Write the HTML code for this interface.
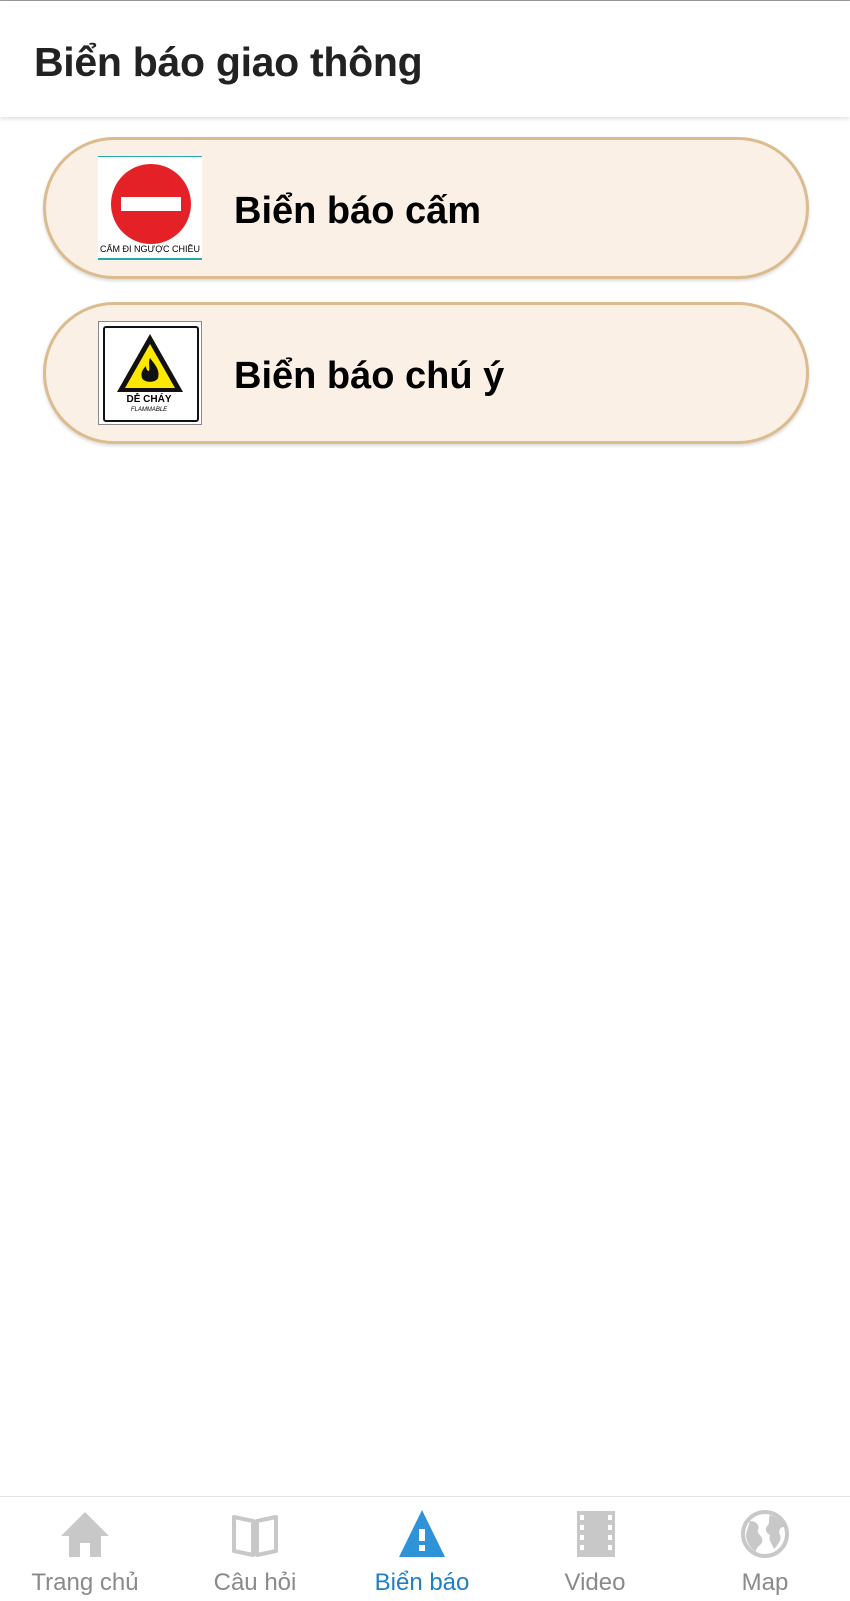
<!DOCTYPE html>
<html><head><meta charset="utf-8"><style>
body{margin:0;width:850px;height:1600px;background:#fff;font-family:"Liberation Sans",sans-serif;position:relative;overflow:hidden}
.top{position:absolute;top:0;left:0;width:850px;height:1px;background:#999}
.hdr{position:absolute;top:1px;left:0;width:850px;height:116px;background:#fff;box-shadow:0 2px 4px rgba(0,0,0,.12)}
.hdr span{position:absolute;left:34px;top:38px;font-size:41px;font-weight:bold;color:#222;letter-spacing:-0.3px}
.card{position:absolute;left:43px;width:760px;height:136px;border:3px solid #dcbc8e;border-radius:72px;background:#faf0e6;box-shadow:0 2px 3px rgba(0,0,0,.15)}
.card .t{position:absolute;left:188px;top:50px;font-size:38px;font-weight:bold;color:#000}
.ic{position:absolute;left:52px;top:16px;width:104px;height:104px;background:#fff}
.nav{position:absolute;top:1496px;left:0;width:850px;height:104px;border-top:1px solid #e4e4e4;background:#fff}
.it{position:absolute;top:0;width:170px;text-align:center}
.it svg{position:absolute;left:60px;top:12px}
.it span{position:absolute;top:72px;left:0;width:170px;font-size:24px;color:#8a8a8a}
</style></head><body>
<div class="top"></div>
<div class="hdr"><span>Biển báo giao thông</span></div>

<div class="card" style="top:137px">
 <div class="ic">
  <div style="position:absolute;top:0;left:0;width:104px;height:1px;background:#2aa"></div>
  <div style="position:absolute;top:102px;left:0;width:104px;height:2px;background:#2aa"></div>
  <div style="position:absolute;left:13px;top:8px;width:80px;height:80px;border-radius:50%;background:#e52128"></div>
  <div style="position:absolute;left:23px;top:41px;width:60px;height:14px;background:#fff"></div>
  <div style="position:absolute;left:0;top:88px;width:104px;font-size:9px;text-align:center;white-space:nowrap;overflow:hidden">CẤM ĐI NGƯỢC CHIỀU</div>
 </div>
 <div class="t">Biển báo cấm</div>
</div>

<div class="card" style="top:302px">
 <div class="ic" style="border:1px solid #888;box-sizing:border-box">
  <div style="position:absolute;left:4px;top:4px;width:92px;height:92px;border:2px solid #111;border-radius:3px"></div>
  <svg style="position:absolute;left:16px;top:10px" width="70" height="62" viewBox="0 0 70 62"><polygon points="35,2 68,60 2,60" fill="#111"/><polygon points="35,12 60,56 10,56" fill="#ffe800"/><path d="M35 26c6 8 10 12 8 20-2 5-14 5-16 0-2-6 2-10 4-12 0 4 2 5 3 5 1-5-1-9 1-13z" fill="#111"/></svg>
  <div style="position:absolute;left:0;top:72px;width:100px;text-align:center;font-size:10px;font-weight:bold">DỄ CHÁY</div>
  <div style="position:absolute;left:0;top:85px;width:100px;text-align:center;font-size:6px;font-style:italic">FLAMMABLE</div>
 </div>
 <div class="t">Biển báo chú ý</div>
</div>

<div class="nav">
 <div class="it" style="left:0"><svg width="50" height="50" viewBox="0 0 50 50"><path d="M25 3 1 27h8v21h11V34h10v14h11V27h8z" fill="#c8c8c8"/></svg><span>Trang chủ</span></div>
 <div class="it" style="left:170px"><svg width="50" height="50" viewBox="0 0 50 50"><path d="M4 8l19 4v34L4 42zM46 8l-19 4v34l19-4z" fill="none" stroke="#c8c8c8" stroke-width="4" stroke-linejoin="round"/></svg><span>Câu hỏi</span></div>
 <div class="it" style="left:337px"><svg width="50" height="50" viewBox="0 0 50 50"><polygon points="25,1 48,48 2,48" fill="#2f93d8"/><rect x="22" y="20" width="6" height="12" fill="#fff"/><rect x="22" y="36" width="6" height="6" fill="#fff"/></svg><span style="color:#1f7fc4">Biển báo</span></div>
 <div class="it" style="left:510px"><svg width="50" height="50" viewBox="0 0 50 50"><rect x="7" y="2" width="38" height="46" fill="#c8c8c8"/><g fill="#fff"><rect x="10" y="6" width="4" height="5"/><rect x="10" y="16" width="4" height="5"/><rect x="10" y="26" width="4" height="5"/><rect x="10" y="36" width="4" height="5"/><rect x="38" y="6" width="4" height="5"/><rect x="38" y="16" width="4" height="5"/><rect x="38" y="26" width="4" height="5"/><rect x="38" y="36" width="4" height="5"/></g></svg><span>Video</span></div>
 <div class="it" style="left:680px"><svg width="50" height="50" viewBox="0 0 50 50"><circle cx="25" cy="25" r="22" fill="none" stroke="#c8c8c8" stroke-width="4"/><path d="M10 12c6 0 10 4 8 9-2 4 6 6 4 12-1 4-6 4-6 10-6-4-10-10-10-18zM30 6c6 1 12 6 14 12-4 0-6 4-4 8s-2 10-6 14c-2-6-6-8-4-14-4-2-6-6-2-10 2-2 0-6 2-10z" fill="#c8c8c8"/></svg><span>Map</span></div>
</div>
</body></html>
